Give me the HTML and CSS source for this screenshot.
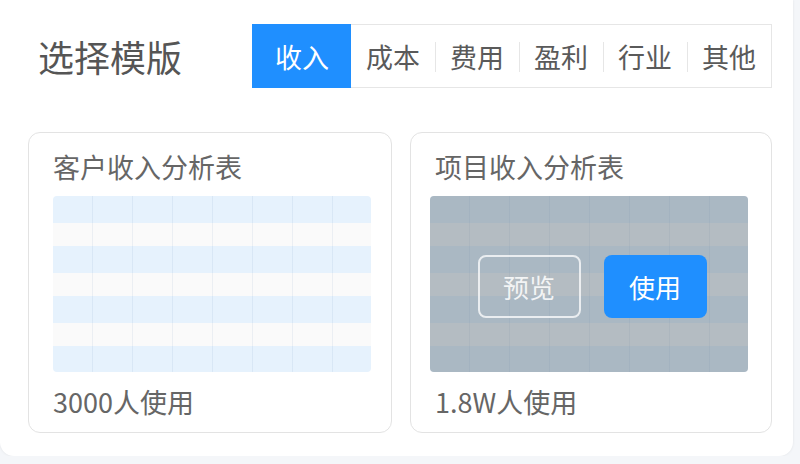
FILE: index.html
```html
<!DOCTYPE html>
<html lang="zh-CN">
<head>
    <meta charset="UTF-8">
    <meta name="viewport" content="width=device-width, initial-scale=1.0">
    <title>选择模版</title>
    <link rel="stylesheet" href="styles.css">
</head>
<body>
    <div class="panel">
        <div class="header">
            <h1>选择模版</h1>
            <div class="tabs">
                <span class="tab active">收入</span>
                <span class="tab">成本</span>
                <span class="tab">费用</span>
                <span class="tab">盈利</span>
                <span class="tab">行业</span>
                <span class="tab">其他</span>
            </div>
        </div>

        <div class="cards">
            <div class="card">
                <div class="card-title">客户收入分析表</div>
                <div class="sheet">
                    <div class="row blue"></div>
                    <div class="row light"></div>
                    <div class="row blue"></div>
                    <div class="row light"></div>
                    <div class="row blue"></div>
                    <div class="row light"></div>
                    <div class="row blue"></div>
                </div>
                <div class="card-foot">3000人使用</div>
            </div>

            <div class="card">
                <div class="card-title">项目收入分析表</div>
                <div class="sheet">
                    <div class="row blue"></div>
                    <div class="row light"></div>
                    <div class="row blue"></div>
                    <div class="row light"></div>
                    <div class="row blue"></div>
                    <div class="row light"></div>
                    <div class="row blue"></div>
                    <div class="mask">
                        <button class="btn btn-ghost">预览</button>
                        <button class="btn btn-primary">使用</button>
                    </div>
                </div>
                <div class="card-foot">1.8W人使用</div>
            </div>
        </div>
    </div>
</body>
</html>
```

FILE: styles.css
```css
body {
    margin: 0;
    background-color: #f4f6f9;
    font-family: "Noto Sans CJK SC", "Noto Sans", sans-serif;
}
.panel {
    width: 793px;
    height: 456px;
    box-sizing: border-box;
    padding: 24px 21px 0 28px;
    background: white;
    border-radius: 0 0 14px 14px;
    box-shadow: 0 0 3px rgba(0,0,0,0.08);
}
.header {
    display: flex;
    align-items: center;
    justify-content: space-between;
}
h1 {
    margin: 0 0 0 10px;
    font-size: 36px;
    font-weight: normal;
    color: #555;
}
.tabs {
    display: flex;
    align-items: center;
    height: 64px;
    box-sizing: border-box;
    border: 1px solid #e6e6e6;
}
.tab {
    position: relative;
    display: flex;
    align-items: center;
    height: 100%;
    padding: 0 15px;
    font-size: 27px;
    color: #5a5a5a;
}
.tab + .tab::before {
    content: "";
    position: absolute;
    left: 0;
    top: 17px;
    height: 30px;
    width: 1px;
    background-color: #e6e6e6;
}
.tab.active {
    height: 64px;
    margin: -1px 0 -1px -1px;
    padding: 0 22px 0 23px;
    background-color: #1f8fff;
    color: white;
}
.tab.active + .tab::before {
    display: none;
}
.cards {
    display: flex;
    gap: 18px;
    margin-top: 44px;
}
.card {
    flex: 1;
    padding: 16px 20px 12px 24px;
    border: 1px solid #e3e3e3;
    border-radius: 12px;
}
.card + .card {
    padding-left: 19px;
    padding-right: 23px;
}
.card + .card .card-title,
.card + .card .card-foot {
    padding-left: 5px;
}
.card-title {
    font-size: 27px;
    line-height: 36px;
    color: #666;
    margin-bottom: 11px;
}
.card-foot {
    font-size: 27px;
    line-height: 36px;
    color: #666;
    margin-top: 12px;
}
.sheet {
    position: relative;
    display: grid;
    grid-template-rows: 27px 23px 27px 23px 27px 23px 26px;
    height: 176px;
    border-radius: 4px;
    overflow: hidden;
}
.row {
    background-image: repeating-linear-gradient(90deg, transparent 0 39px, rgba(40,90,150,0.07) 39px 40px);
}
.row.blue {
    background-color: #e6f2fd;
}
.row.light {
    background-color: #fafafa;
}
.mask {
    position: absolute;
    inset: 0;
    display: flex;
    align-items: center;
    justify-content: center;
    gap: 23px;
    padding: 4px 0 0 6px;
    background-color: rgba(110,125,137,0.5);
}
.btn {
    width: 103px;
    height: 63px;
    border-radius: 8px;
    font-family: inherit;
    font-size: 26px;
    cursor: pointer;
}
.btn-ghost {
    background: transparent;
    border: 2px solid rgba(255,255,255,0.75);
    color: rgba(255,255,255,0.85);
}
.btn-primary {
    background-color: #1f8fff;
    border: none;
    color: white;
}
```
